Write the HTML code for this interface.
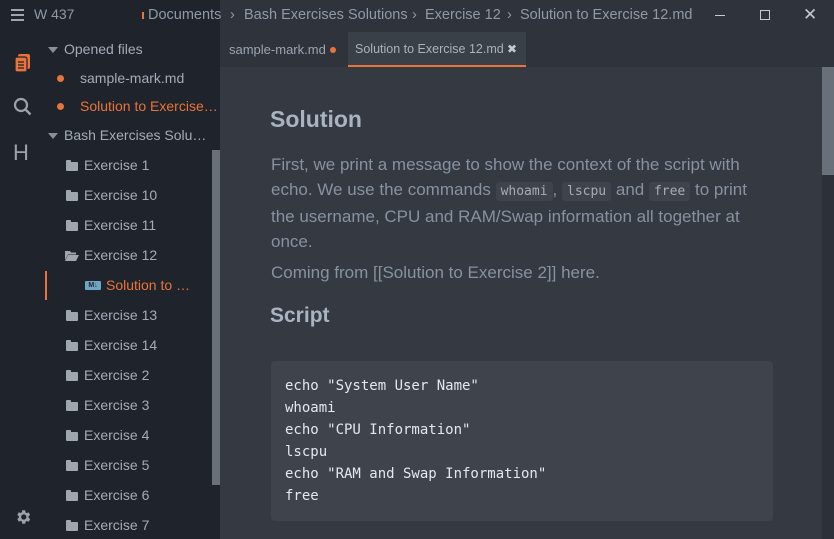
<!DOCTYPE html>
<html><head><style>
*{margin:0;padding:0;box-sizing:border-box}
body{width:834px;height:539px;overflow:hidden;background:#353942;font-family:"Liberation Sans","DejaVu Sans",sans-serif;position:relative}
.a{position:absolute;white-space:nowrap}
#side{left:0;top:0;width:220px;height:539px;background:#1f232b}
.t{font-size:14px;color:#a3acb8}
.o{color:#e8743b}
.fold{width:12px;height:9px;background:#a0a6ae;border-radius:1px}
.fold:before{content:"";position:absolute;left:0;top:-2px;width:5px;height:3px;background:#a0a6ae;border-radius:1px 1px 0 0}
.tri{width:0;height:0;border-left:5px solid transparent;border-right:5px solid transparent;border-top:6px solid #8a9099}
.dot{width:7px;height:7px;border-radius:50%;background:#e8743b}
.bc{font-size:14.5px;color:#8f9aa8;top:7px}
.p{font-size:17px;color:#8792a0;line-height:25px}
code{font-family:"DejaVu Sans Mono","Liberation Mono",monospace;font-size:13px;background:#3e434c;color:#a4adb8;padding:2px 5px;border-radius:3px}
</style></head><body>
<div class="a" id="side"></div>
<div class="a" style="left:0;top:0;width:834px;height:30px;background:#2f333b"></div>
<div class="a" style="left:0;top:0;width:220px;height:30px;background:#1f232b"></div>
<div class="a" style="left:11px;top:9px;width:13px;height:2px;background:#a0a6ae;box-shadow:0 5px 0 #a0a6ae,0 10px 0 #a0a6ae"></div>
<div class="a t" style="left:34px;top:6px;font-size:14px;color:#8f9aa8">W 437</div>
<div class="a" style="left:142px;top:12px;width:2px;height:7px;background:#e8743b"></div>
<div class="a bc" style="left:148px">Documents</div>
<div class="a bc" style="left:230px">›</div>
<div class="a bc" style="left:244px">Bash Exercises Solutions</div>
<div class="a bc" style="left:412px">›</div>
<div class="a bc" style="left:425px">Exercise 12</div>
<div class="a bc" style="left:507px">›</div>
<div class="a bc" style="left:520px">Solution to Exercise 12.md</div>
<div class="a" style="left:715px;top:15px;width:10px;height:1px;background:#c5cad2"></div>
<div class="a" style="left:760px;top:10px;width:10px;height:10px;border:1px solid #c5cad2"></div>
<div class="a" style="left:803px;top:5px;font-size:17px;color:#c5cad2">✕</div>
<div class="a" style="left:220px;top:30px;width:614px;height:37px;background:#2f333b"></div>
<div class="a" style="left:229px;top:42px;font-size:13px;color:#9ba5b1">sample-mark.md</div>
<div class="a dot" style="left:330px;top:47px;width:6px;height:6px"></div>
<div class="a" style="left:348px;top:32px;width:178px;height:35px;background:#3a4048;border-bottom:2px solid #e8743b"></div>
<div class="a" style="left:355px;top:42px;font-size:12.5px;color:#a9b2bd">Solution to Exercise 12.md</div>
<div class="a" style="left:507px;top:42px;font-size:12px;color:#c5cad2;font-weight:bold">✖</div>
<div class="a" style="left:822px;top:67px;width:12px;height:472px;background:#2c3038"></div>
<div class="a" style="left:822px;top:67px;width:12px;height:108px;background:#6a707a"></div>
<svg class="a" style="left:14px;top:53px" width="18" height="20" viewBox="0 0 18 20"><rect x="4" y="1" width="12" height="15" rx="2" fill="#e8743b"/><rect x="1" y="4" width="12" height="15" rx="2" fill="#e8743b" stroke="#1f232b" stroke-width="1.2"/><path d="M4 9h6M4 12h6M4 15h6" stroke="#1f232b" stroke-width="1.3"/></svg>
<svg class="a" style="left:13px;top:97px" width="20" height="20" viewBox="0 0 20 20"><circle cx="8" cy="8" r="6" fill="none" stroke="#9ca2aa" stroke-width="2.2"/><path d="M12.5 12.5l5 5" stroke="#9ca2aa" stroke-width="2.4"/></svg>
<div class="a" style="left:13px;top:140px;font-size:22px;color:#9ca2aa">H</div>
<svg class="a" style="left:14px;top:508px" width="18" height="18" viewBox="0 0 24 24"><path fill="#9ca2aa" d="M19.4 13a7.5 7.5 0 000-2l2.1-1.6-2-3.5-2.5 1a7 7 0 00-1.7-1L15 3h-4l-.4 2.7a7 7 0 00-1.7 1l-2.5-1-2 3.5L6.5 11a7.5 7.5 0 000 2l-2.1 1.6 2 3.5 2.5-1a7 7 0 001.7 1L11 21h4l.4-2.7a7 7 0 001.7-1l2.5 1 2-3.5zM13 15.5a3.5 3.5 0 110-7 3.5 3.5 0 010 7z"/></svg>
<div class="a tri" style="left:48px;top:47px"></div>
<div class="a t" style="left:64px;top:41px">Opened files</div>
<div class="a dot" style="left:57px;top:75px"></div>
<div class="a t" style="left:80px;top:70px">sample-mark.md</div>
<div class="a dot" style="left:57px;top:103px"></div>
<div class="a t o" style="left:80px;top:98px">Solution to Exercise…</div>
<div class="a tri" style="left:48px;top:133px"></div>
<div class="a t" style="left:64px;top:127px">Bash Exercises Solu…</div>
<div class="a fold" style="left:66px;top:162px"></div><div class="a t" style="left:84px;top:157px">Exercise 1</div>
<div class="a fold" style="left:66px;top:192px"></div><div class="a t" style="left:84px;top:187px">Exercise 10</div>
<div class="a fold" style="left:66px;top:222px"></div><div class="a t" style="left:84px;top:217px">Exercise 11</div>
<svg class="a" style="left:65px;top:250px" width="14" height="11" viewBox="0 0 14 11"><path d="M0 1h5l1 1.5h5v2H3L0 10z" fill="#a0a6ae"/><path d="M3 5h11l-3 6H0z" fill="#a0a6ae"/></svg>
<div class="a t" style="left:84px;top:247px">Exercise 12</div>
<div class="a" style="left:45px;top:271px;width:2px;height:29px;background:#e8743b"></div>
<div class="a" style="left:85px;top:281px;width:16px;height:9px;background:#6fa6c4;border-radius:1px;font-size:7px;font-weight:bold;color:#1f232b;line-height:9px;text-align:center">M↓</div>
<div class="a t o" style="left:106px;top:277px">Solution to …</div>
<div class="a fold" style="left:66px;top:312px"></div><div class="a t" style="left:84px;top:307px">Exercise 13</div>
<div class="a fold" style="left:66px;top:342px"></div><div class="a t" style="left:84px;top:337px">Exercise 14</div>
<div class="a fold" style="left:66px;top:372px"></div><div class="a t" style="left:84px;top:367px">Exercise 2</div>
<div class="a fold" style="left:66px;top:402px"></div><div class="a t" style="left:84px;top:397px">Exercise 3</div>
<div class="a fold" style="left:66px;top:432px"></div><div class="a t" style="left:84px;top:427px">Exercise 4</div>
<div class="a fold" style="left:66px;top:462px"></div><div class="a t" style="left:84px;top:457px">Exercise 5</div>
<div class="a fold" style="left:66px;top:492px"></div><div class="a t" style="left:84px;top:487px">Exercise 6</div>
<div class="a fold" style="left:66px;top:522px"></div><div class="a t" style="left:84px;top:517px">Exercise 7</div>
<div class="a" style="left:212px;top:150px;width:8px;height:335px;background:#6a707a"></div>
<div class="a" style="left:270px;top:106px;font-size:23px;font-weight:bold;color:#a9b4c2">Solution</div>
<div class="a p" style="left:271px;top:152px;white-space:normal;width:500px">First, we print a message to show the context of the script with echo. We use the commands <code>whoami</code>, <code>lscpu</code> and <code>free</code> to print the username, CPU and RAM/Swap information all together at once.</div>
<div class="a p" style="left:271px;top:260px">Coming from [[Solution to Exercise 2]] here.</div>
<div class="a" style="left:270px;top:304px;font-size:21px;font-weight:bold;color:#a9b4c2">Script</div>
<div class="a" style="left:271px;top:361px;width:502px;height:160px;background:#3e434c;border-radius:4px"></div>
<pre class="a" style="left:285px;top:375px;white-space:pre;font-family:'DejaVu Sans Mono','Liberation Mono',monospace;font-size:14px;line-height:22px;color:#e4e8ee">echo "System User Name"
whoami
echo "CPU Information"
lscpu
echo "RAM and Swap Information"
free</pre>
</body></html>
